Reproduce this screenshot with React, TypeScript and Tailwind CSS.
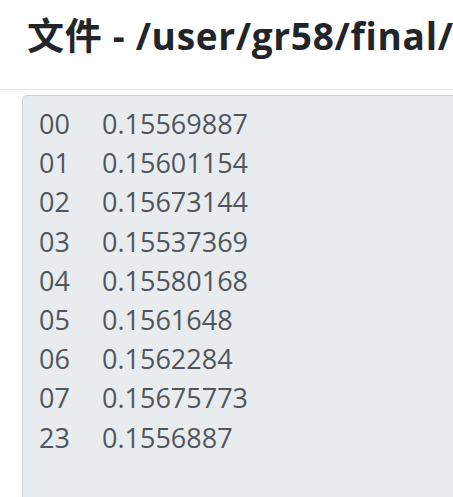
const rows: [string, string][] = [
  ["00", "0.15569887"],
  ["01", "0.15601154"],
  ["02", "0.15673144"],
  ["03", "0.15537369"],
  ["04", "0.15580168"],
  ["05", "0.1561648"],
  ["06", "0.1562284"],
  ["07", "0.15675773"],
  ["23", "0.1556887"],
];

export default function App() {
  return (
    <div className="h-[497px] w-full overflow-hidden bg-white font-['Open_Sans','Noto_Sans_CJK_SC',sans-serif]">
      <div className="h-[89px] overflow-hidden whitespace-nowrap pl-[27px] pt-[14px]">
        <h1 className="text-[37px] font-bold leading-[44px] tracking-[0.7px] text-[#212529]">
          文件 - /user/gr58/final/result.txt
        </h1>
      </div>
      <div className="h-px w-full bg-[#e5e7ea]" />
      <div className="ml-[22px] mt-[5px] h-[420px] rounded-tl-[5px] border-l border-t border-[#d3d7db] bg-[#e9ecef] pl-[16px] pt-[8px] text-[27px] leading-[39.2px] text-[#50565c]">
        {rows.map(([k, v]) => (
          <div key={k} className="flex whitespace-nowrap">
            <span className="w-[63px] shrink-0">{k}</span>
            <span>{v}</span>
          </div>
        ))}
      </div>
    </div>
  );
}
